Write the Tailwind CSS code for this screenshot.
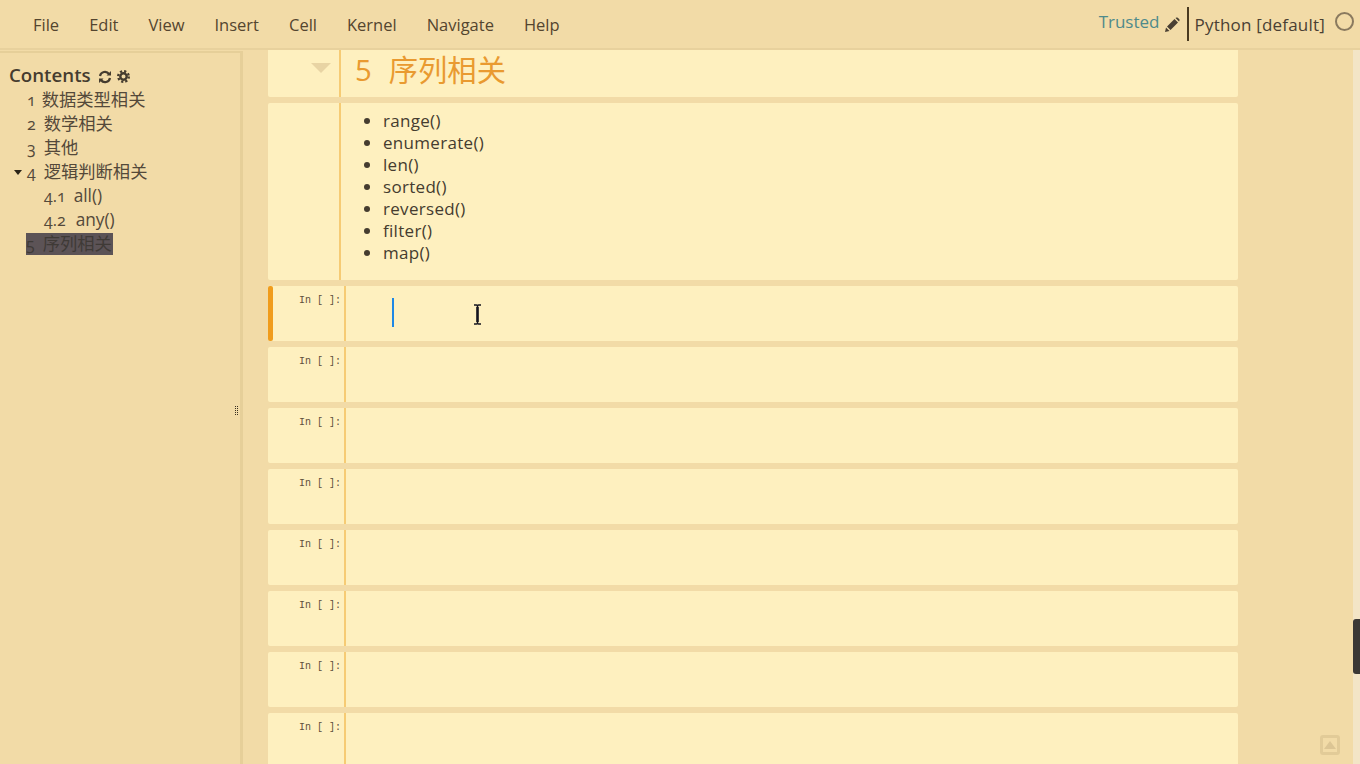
<!DOCTYPE html>
<html lang="en">

<head>
    <meta charset="UTF-8" />
    <meta name="viewport" content="width=device-width, initial-scale=1.0" />
    <script src="https://cdn.jsdelivr.net/npm/@tailwindcss/browser@4"></script>
    <title>Notebook</title>
</head>

<body class="bg-[#f2dba7] text-[#4a4033] h-screen overflow-hidden flex flex-col font-['Open_Sans','Noto_Sans_CJK_SC',sans-serif]">

    <header class="h-[50px] shrink-0 border-b-2 border-[#e8d19d] flex items-start">
        <nav class="flex text-[16.500px] leading-[22px] pt-[14px] pl-[33px] text-[#54452f] gap-[30px]">
            <a>File</a>
            <a>Edit</a>
            <a>View</a>
            <a>Insert</a>
            <a>Cell</a>
            <a>Kernel</a>
            <a>Navigate</a>
            <a>Help</a>
        </nav>
        <div class="ml-auto flex items-start">
            <span class="text-[17px] leading-[22px] pt-[11px] text-[#4f8a8b]">Trusted</span>
            <svg class="mt-[17px] ml-[5px]" width="16" height="16" viewBox="0 0 16 16" fill="#4a4033">
                <path d="M1 15l1-4.500 3.500 3.500zM3 9.500l7.500-7.500 3.500 3.500-7.500 7.500zM11.500 1l1-.5q.7-.3 1.300.2l1.500 1.500q.5.6.2 1.300l-.5 1z" />
            </svg>
            <div class="w-[2px] h-[34px] mt-[7px] ml-[7px] bg-[#4a3a20]"></div>
            <span class="text-[17px] tracking-[0.2px] leading-[22px] pt-[14px] pl-[5px] text-[#4a4033]">Python [default]</span>
            <div class="w-[19px] h-[19px] mt-[12px] ml-[10px] mr-[6px] rounded-full border-2 border-[#8a7a5f]"></div>
        </div>
    </header>

    <div class="flex flex-1 min-h-0">
        <aside class="relative w-[243px] shrink-0 mt-[1px] border-r-[3px] border-t-2 border-[#e6cf99] pl-[9px] pt-[10px]">
            <div class="flex items-center h-[24px] font-semibold text-[18.700px] text-[#453c2f]">
                Contents
                <svg class="ml-[7px] mt-[3px]" width="14" height="14" viewBox="0 0 14 14" fill="none" stroke="#453c2f" stroke-width="2.200">
                    <path d="M2 6a5 5 0 0 1 9-2M12 8a5 5 0 0 1-9 2" />
                    <path d="M13 1v4.500H8.500zM1 13V8.500h4.500z" fill="#453c2f" stroke="none" />
                </svg>
                <svg class="ml-[5px] mt-[3px]" width="13" height="13" viewBox="0 0 13 13" fill="none" stroke="#453c2f">
                    <circle cx="6.500" cy="6.500" r="3.200" stroke-width="2.400" />
                    <circle cx="6.500" cy="6.500" r="5.300" stroke-width="2.400" stroke-dasharray="2.160 2" />
                </svg>
            </div>
            <ul class="text-[17.300px] text-[#54493a] mt-[1px]">
                <li class="h-[24px] leading-[24px] pl-[18px]"><span class="oldstyle-nums mr-[6px] text-[16px]">1</span>数据类型相关</li>
                <li class="h-[24px] leading-[24px] pl-[18px]"><span class="oldstyle-nums mr-[8px] text-[16px]">2</span>数学相关</li>
                <li class="h-[24px] leading-[24px] pl-[18px]"><span class="oldstyle-nums mr-[8px] text-[16px]">3</span>其他</li>
                <li class="relative h-[24px] leading-[24px] pl-[18px]">
                    <span class="absolute left-[5px] top-[10px] border-x-[4px] border-t-[5px] border-x-transparent border-t-[#2b2418]"></span>
                    <span class="oldstyle-nums mr-[8px] text-[16px]">4</span>逻辑判断相关
                </li>
                <li class="h-[24px] leading-[24px] pl-[35px]"><span class="oldstyle-nums mr-[8px] text-[16px]">4.1</span>all()</li>
                <li class="h-[24px] leading-[24px] pl-[35px]"><span class="oldstyle-nums mr-[10px] text-[16px]">4.2</span>any()</li>
                <li class="h-[24px] pl-[17px] pt-[1px]"><span class="block h-[22px] leading-[22px] w-[87px] bg-[#5c5356] text-[#3f3a36] whitespace-nowrap"><span class="oldstyle-nums mr-[8px] text-[16px]">5</span>序列相关</span></li>
            </ul>
            <div class="absolute right-[2px] top-[353px] grid grid-cols-2 gap-[1px]">
                <i class="w-[1px] h-[1px] bg-[#3a2f20]"></i><i class="w-[1px] h-[1px] bg-[#3a2f20]"></i>
                <i class="w-[1px] h-[1px] bg-[#3a2f20]"></i><i class="w-[1px] h-[1px] bg-[#3a2f20]"></i>
                <i class="w-[1px] h-[1px] bg-[#3a2f20]"></i><i class="w-[1px] h-[1px] bg-[#3a2f20]"></i>
                <i class="w-[1px] h-[1px] bg-[#3a2f20]"></i><i class="w-[1px] h-[1px] bg-[#3a2f20]"></i>
                <i class="w-[1px] h-[1px] bg-[#3a2f20]"></i><i class="w-[1px] h-[1px] bg-[#3a2f20]"></i>
            </div>
        </aside>

        <main class="relative flex-1 pl-[25px] min-w-0">
            <div class="w-[970px] flex flex-col gap-[6px]">
                <!-- heading -->
                <div class="h-[47px] bg-[#fef0bf] rounded-b-[2px] flex">
                    <div class="relative w-[73px] border-r-2 border-[#f6cb74] shrink-0">
                        <span class="absolute left-[43px] top-[13px] border-x-[10px] border-t-[10px] border-x-transparent border-t-[#e8d4a4]"></span>
                    </div>
                    <h1 class="pl-[14px] text-[29.300px] leading-[41px] text-[#e99a30]"><span class="mr-[17px]">5</span>序列相关</h1>
                </div>
                <!-- markdown -->
                <div class="h-[177px] bg-[#fef0bf] rounded-[2px] flex">
                    <div class="w-[73px] border-r-2 border-[#f6cb74] shrink-0"></div>
                    <ul class="list-disc pl-[42px] pt-[7px] text-[17px] tracking-[0.300px] leading-[22px] text-[#453c2f]">
                        <li>range()</li>
                        <li>enumerate()</li>
                        <li>len()</li>
                        <li>sorted()</li>
                        <li>reversed()</li>
                        <li>filter()</li>
                        <li>map()</li>
                    </ul>
                </div>
                <!-- selected cell -->
                <div class="relative h-[55px] bg-[#fef0bf] rounded-[2px] flex">
                    <div class="w-[5px] bg-[#f09c1c] rounded-[2px] shrink-0"></div>
                    <div class="w-[73px] border-r-2 border-[#f6cb74] shrink-0 text-right pr-[3px] pt-[8px] font-['Liberation_Mono'] text-[10px] leading-[13px] text-[#5d4f3a]">In [ ]:</div>
                    <div class="w-[2px] h-[29px] mt-[12px] ml-[46px] bg-[#1e88e5]"></div>
                    <svg class="absolute left-[205px] top-[18px]" width="9" height="21" viewBox="0 0 9 21" fill="none" stroke="#14141e" stroke-width="1.500">
                        <path d="M1 1h2.500q1 0 1 1v17q0 1-1 1H1M8 1H5.500q-1 0-1 1v17q0 1 1 1H8" />
                        <path d="M4.500 3v15" stroke-width="2.500" />
                    </svg>
                </div>
                <!-- empty cells -->
                <div class="h-[55px] bg-[#fef0bf] rounded-[2px]"><div class="w-[78px] h-full border-r-2 border-[#f6cb74] text-right pr-[3px] pt-[8px] font-['Liberation_Mono'] text-[10px] leading-[13px] text-[#5d4f3a]">In [ ]:</div></div>
                <div class="h-[55px] bg-[#fef0bf] rounded-[2px]"><div class="w-[78px] h-full border-r-2 border-[#f6cb74] text-right pr-[3px] pt-[8px] font-['Liberation_Mono'] text-[10px] leading-[13px] text-[#5d4f3a]">In [ ]:</div></div>
                <div class="h-[55px] bg-[#fef0bf] rounded-[2px]"><div class="w-[78px] h-full border-r-2 border-[#f6cb74] text-right pr-[3px] pt-[8px] font-['Liberation_Mono'] text-[10px] leading-[13px] text-[#5d4f3a]">In [ ]:</div></div>
                <div class="h-[55px] bg-[#fef0bf] rounded-[2px]"><div class="w-[78px] h-full border-r-2 border-[#f6cb74] text-right pr-[3px] pt-[8px] font-['Liberation_Mono'] text-[10px] leading-[13px] text-[#5d4f3a]">In [ ]:</div></div>
                <div class="h-[55px] bg-[#fef0bf] rounded-[2px]"><div class="w-[78px] h-full border-r-2 border-[#f6cb74] text-right pr-[3px] pt-[8px] font-['Liberation_Mono'] text-[10px] leading-[13px] text-[#5d4f3a]">In [ ]:</div></div>
                <div class="h-[55px] bg-[#fef0bf] rounded-[2px]"><div class="w-[78px] h-full border-r-2 border-[#f6cb74] text-right pr-[3px] pt-[8px] font-['Liberation_Mono'] text-[10px] leading-[13px] text-[#5d4f3a]">In [ ]:</div></div>
                <div class="h-[55px] bg-[#fef0bf] rounded-[2px]"><div class="w-[78px] h-full border-r-2 border-[#f6cb74] text-right pr-[3px] pt-[8px] font-['Liberation_Mono'] text-[10px] leading-[13px] text-[#5d4f3a]">In [ ]:</div></div>
            </div>

            <!-- back to top -->
            <div class="absolute right-[20px] bottom-[9px] w-[20px] h-[20px] rounded-[3px] border-[3px] border-[#e2cb98] flex items-center justify-center">
                <span class="border-x-[6px] border-b-[8px] border-x-transparent border-b-[#dcc594]"></span>
            </div>
            <!-- page scrollbar -->
            <div class="absolute right-0 top-0 w-[7px] h-full bg-[#f3e5c6]">
                <div class="absolute left-0 top-[569px] w-[7px] h-[55px] rounded-l-[3px] bg-[#3b3834]"></div>
            </div>
        </main>
    </div>

</body>

</html>
